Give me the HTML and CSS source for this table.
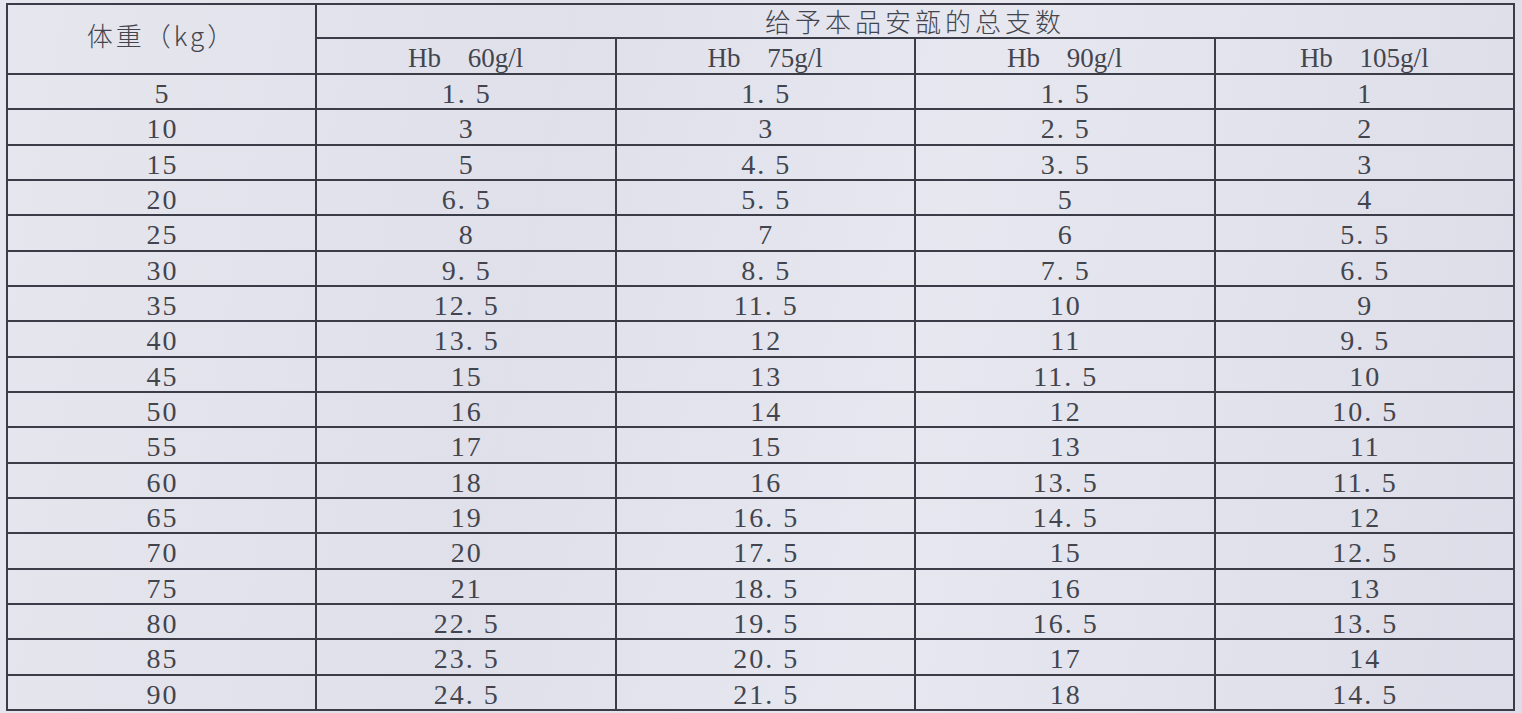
FILE: index.html
```html
<!DOCTYPE html>
<html lang="zh-CN">
<head>
<meta charset="utf-8">
<title>给予本品安瓿的总支数</title>
<link rel="stylesheet" href="styles.css">
</head>
<body>
<div class="sheet">
<table class="dose">
  <colgroup>
    <col class="c-w"><col class="c-h"><col class="c-h"><col class="c-h"><col class="c-h">
  </colgroup>
  <thead>
    <tr class="r-title">
      <th rowspan="2" class="weight-head">体重（kg）</th>
      <th colspan="4" class="title">给予本品安瓿的总支数</th>
    </tr>
    <tr class="r-sub">
      <th class="hb">Hb 60g/l</th>
      <th class="hb">Hb 75g/l</th>
      <th class="hb">Hb 90g/l</th>
      <th class="hb">Hb 105g/l</th>
    </tr>
  </thead>
  <tbody>
    <tr><td>5</td><td>1. 5</td><td>1. 5</td><td>1. 5</td><td>1</td></tr>
    <tr><td>10</td><td>3</td><td>3</td><td>2. 5</td><td>2</td></tr>
    <tr><td>15</td><td>5</td><td>4. 5</td><td>3. 5</td><td>3</td></tr>
    <tr><td>20</td><td>6. 5</td><td>5. 5</td><td>5</td><td>4</td></tr>
    <tr><td>25</td><td>8</td><td>7</td><td>6</td><td>5. 5</td></tr>
    <tr><td>30</td><td>9. 5</td><td>8. 5</td><td>7. 5</td><td>6. 5</td></tr>
    <tr><td>35</td><td>12. 5</td><td>11. 5</td><td>10</td><td>9</td></tr>
    <tr><td>40</td><td>13. 5</td><td>12</td><td>11</td><td>9. 5</td></tr>
    <tr><td>45</td><td>15</td><td>13</td><td>11. 5</td><td>10</td></tr>
    <tr><td>50</td><td>16</td><td>14</td><td>12</td><td>10. 5</td></tr>
    <tr><td>55</td><td>17</td><td>15</td><td>13</td><td>11</td></tr>
    <tr><td>60</td><td>18</td><td>16</td><td>13. 5</td><td>11. 5</td></tr>
    <tr><td>65</td><td>19</td><td>16. 5</td><td>14. 5</td><td>12</td></tr>
    <tr><td>70</td><td>20</td><td>17. 5</td><td>15</td><td>12. 5</td></tr>
    <tr><td>75</td><td>21</td><td>18. 5</td><td>16</td><td>13</td></tr>
    <tr><td>80</td><td>22. 5</td><td>19. 5</td><td>16. 5</td><td>13. 5</td></tr>
    <tr><td>85</td><td>23. 5</td><td>20. 5</td><td>17</td><td>14</td></tr>
    <tr><td>90</td><td>24. 5</td><td>21. 5</td><td>18</td><td>14. 5</td></tr>
  </tbody>
</table>
</div>
</body>
</html>
```

FILE: styles.css
```css
html, body {
  margin: 0;
  padding: 0;
  background: #e3e4ed;
}
body {
  width: 1522px;
  height: 713px;
  overflow: hidden;
  color: #43454e;
  font-family: "Liberation Serif", "Noto Sans CJK SC", serif;
}
.sheet {
  padding: 3px 0 0 6px;
  background: linear-gradient(100deg, #e6e6ee 0%, #dfe0ea 35%, #e6e7ef 60%, #dcdde8 100%);
  height: 710px;
}
.dose {
  border-collapse: collapse;
  table-layout: fixed;
  width: 1507px;
}
.c-w { width: 309px; }
.c-h { width: 299.5px; }
.dose th, .dose td {
  border: 2px solid #3a3d47;
  padding: 0;
  text-align: center;
  font-weight: normal;
  white-space: pre;
}
.dose .weight-head {
  font-family: "Noto Sans CJK SC", sans-serif;
  font-size: 26px;
  font-weight: 300;
  letter-spacing: 3px;
  vertical-align: middle;
  line-height: 30px;
  padding-bottom: 8px;
}
.dose .title {
  font-family: "Noto Sans CJK SC", sans-serif;
  font-size: 26px;
  font-weight: 300;
  letter-spacing: 4px;
  line-height: 32px;
  vertical-align: top;
}
.dose .hb {
  font-size: 27px;
  line-height: 30px;
  word-spacing: 20px;
  padding-top: 4px;
}
.dose td {
  font-family: "Liberation Serif", serif;
  font-size: 28px;
  line-height: 29.33px;
  letter-spacing: 2px;
  padding-left: 2px;
  padding-top: 4px;
}
```
